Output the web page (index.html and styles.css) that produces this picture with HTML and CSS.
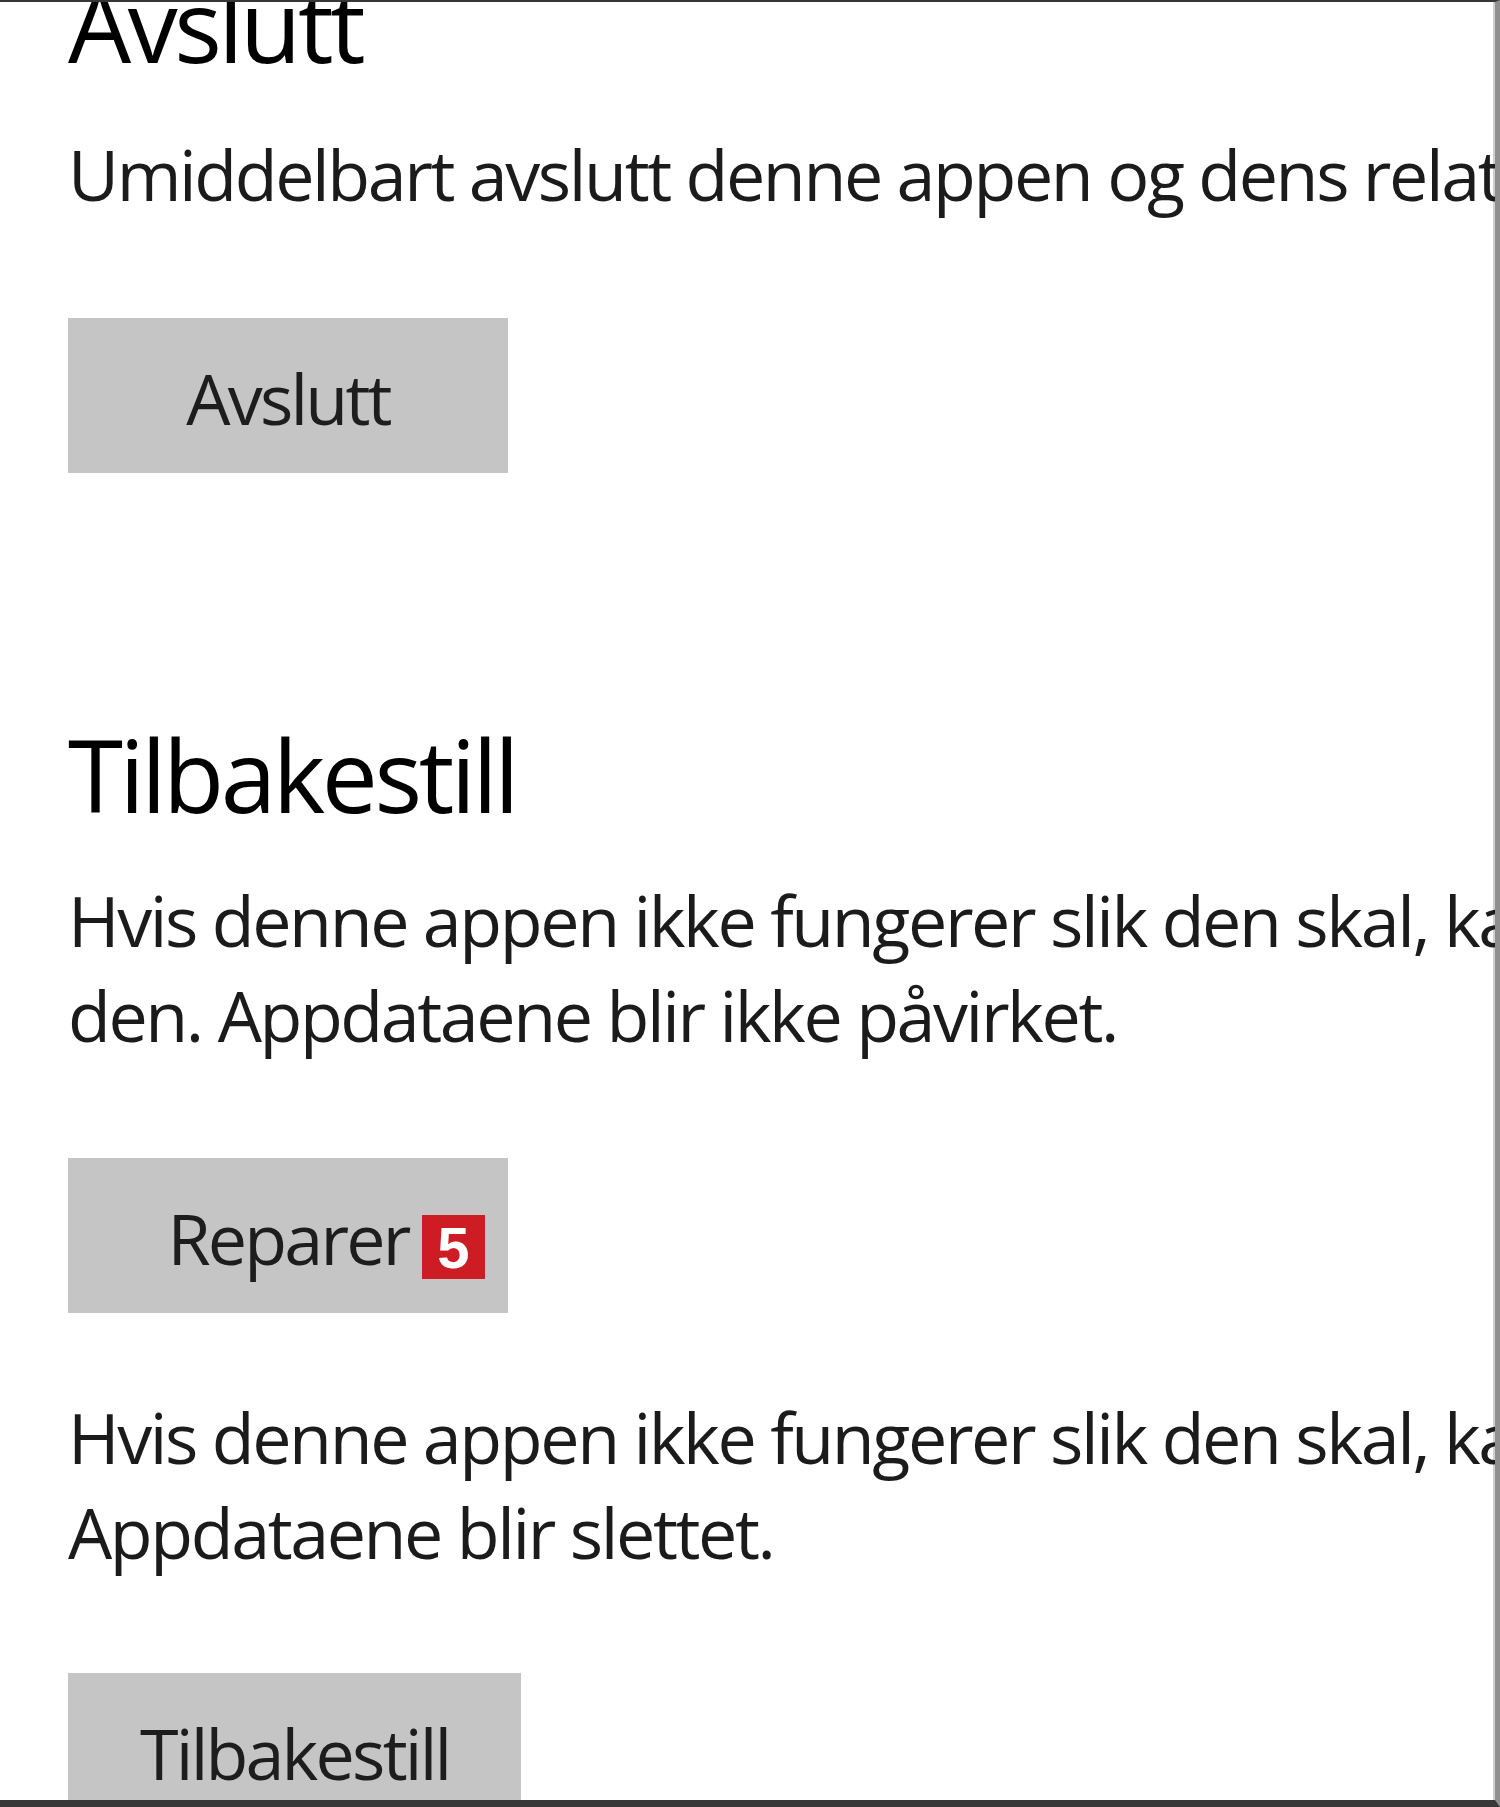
FILE: index.html
```html
<!DOCTYPE html>
<html lang="nb">
<head>
  <meta charset="UTF-8">
  <title>Innstillinger - Avslutt og tilbakestill</title>
  <link rel="stylesheet" href="styles.css">
</head>
<body>
<div class="window">
  <div class="page">

    <section class="group group-end">
      <h2 class="title">Avslutt</h2>
      <p class="desc desc-end">
        <span class="line">Umiddelbart avslutt denne appen og dens relaterte prosesser.</span>
      </p>
      <button class="btn btn-end" type="button">Avslutt</button>
    </section>

    <section class="group group-reset">
      <h2 class="title">Tilbakestill</h2>
      <p class="desc desc-repair">
        <span class="line">Hvis denne appen ikke fungerer slik den skal, kan vi prøve å reparere</span>
        <span class="line">den. Appdataene blir ikke påvirket.</span>
      </p>
      <button class="btn btn-repair" type="button">Reparer<span class="badge">5</span></button>
      <p class="desc desc-reset">
        <span class="line">Hvis denne appen ikke fungerer slik den skal, kan du tilbakestille den.</span>
        <span class="line">Appdataene blir slettet.</span>
      </p>
      <button class="btn btn-reset" type="button">Tilbakestill</button>
    </section>

  </div>
</div>
</body>
</html>
```

FILE: styles.css
```css
body {
  margin: 0;
  background: #fff;
}

.window {
  width: 1500px;
  height: 1807px;
  box-sizing: border-box;
  overflow: hidden;
  background: #fff;
  border-top: 2px solid #363636;
  border-right: 5px solid #8f8f8f;
  border-bottom: 7px solid #383838;
  box-shadow: inset -2px 0 #cfcfcf;
}

.page {
  display: flex;
  flex-direction: column;
  align-items: flex-start;
  padding-left: 68px;
  margin-top: -38px;
  font-family: "Open Sans", "Noto Sans", sans-serif;
  color: #1b1b1b;
}

.group {
  display: flex;
  flex-direction: column;
  align-items: flex-start;
}

.group-reset {
  margin-top: 241px;
}

.title {
  margin: 0;
  font-size: 100px;
  line-height: 120px;
  font-weight: 400;
  letter-spacing: -3.5px;
  color: #000;
  white-space: nowrap;
}

.desc {
  margin: 0;
  font-size: 70px;
  line-height: 95px;
  letter-spacing: -2.4px;
}

.line {
  display: block;
  white-space: nowrap;
}

.desc-end {
  margin-top: 43px;
}

.desc-repair {
  margin-top: 39px;
}

.desc-reset {
  margin-top: 77px;
}

.btn {
  position: relative;
  box-sizing: border-box;
  height: 155px;
  min-width: 440px;
  padding: 6px 72px 0;
  border: 0;
  border-radius: 0;
  background: #c4c5c4;
  font: inherit;
  font-size: 70px;
  line-height: 149px;
  letter-spacing: -2.8px;
  color: #1d1d1d;
  text-align: center;
  white-space: nowrap;
}

.btn-end {
  margin-top: 96px;
}

.btn-repair {
  margin-top: 95px;
}

.btn-reset {
  margin-top: 93px;
}

/* red step marker laid over the button */
.badge {
  position: absolute;
  left: 354px;
  top: 57px;
  width: 63px;
  height: 64px;
  background: #cd1c24;
  color: #fff;
  font-family: "Liberation Sans", Arial, sans-serif;
  font-weight: 700;
  font-size: 58px;
  line-height: 66px;
  letter-spacing: 0;
  text-align: center;
}
```
